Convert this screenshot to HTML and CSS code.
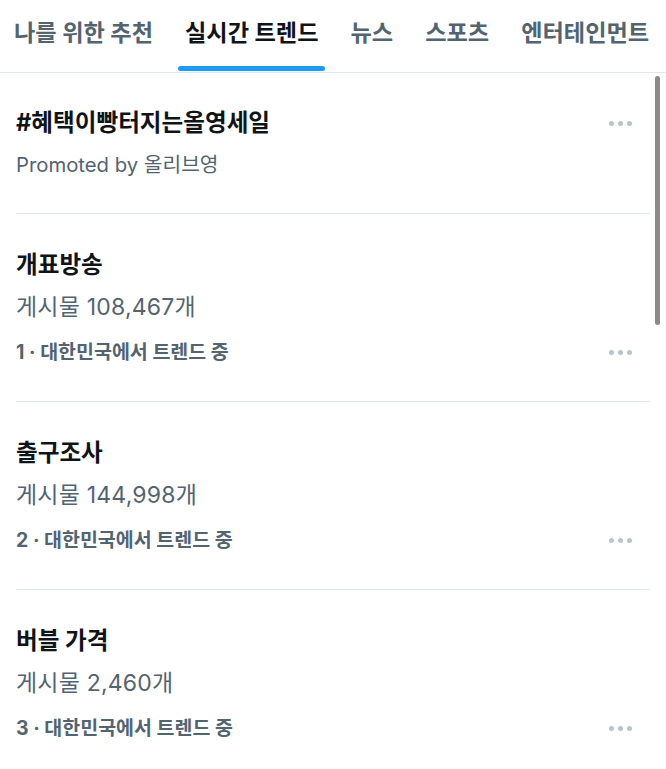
FILE: index.html
```html
<!DOCTYPE html>
<html lang="ko">
<head>
<meta charset="utf-8">
<title>실시간 트렌드</title>
<link rel="stylesheet" href="styles.css">
</head>
<body>
<div class="page">
  <nav class="tabs">
    <a class="tab">나를 위한 추천</a>
    <a class="tab active">실시간 트렌드<span class="bar"></span></a>
    <a class="tab">뉴스</a>
    <a class="tab">스포츠</a>
    <a class="tab">엔터테인먼트</a>
  </nav>

  <ul class="trends">
    <li class="trend promo">
      <div class="row">
        <span class="title">#혜택이빵터지는올영세일</span>
        <span class="more"><i></i><i></i><i></i></span>
      </div>
      <div class="sub">Promoted by 올리브영</div>
    </li>
    <li class="trend">
      <div class="title">개표방송</div>
      <div class="count">게시물 108,467개</div>
      <div class="row rank">
        <span>1 · 대한민국에서 트렌드 중</span>
        <span class="more"><i></i><i></i><i></i></span>
      </div>
    </li>
    <li class="trend">
      <div class="title">출구조사</div>
      <div class="count">게시물 144,998개</div>
      <div class="row rank">
        <span>2 · 대한민국에서 트렌드 중</span>
        <span class="more"><i></i><i></i><i></i></span>
      </div>
    </li>
    <li class="trend">
      <div class="title">버블 가격</div>
      <div class="count">게시물 2,460개</div>
      <div class="row rank">
        <span>3 · 대한민국에서 트렌드 중</span>
        <span class="more"><i></i><i></i><i></i></span>
      </div>
    </li>
  </ul>

  <div class="scrollbar"></div>
</div>
</body>
</html>
```

FILE: styles.css
```css
body {
    margin: 0;
    background: #fff;
    font-family: Inter, "Noto Sans CJK KR", sans-serif;
    color: #0f1419;
}
.page {
    position: relative;
    width: 666px;
    height: 769px;
    overflow: hidden;
}

/* tabs */
.tabs {
    display: flex;
    height: 72px;
    border-bottom: 1px solid #e1e8ec;
    white-space: nowrap;
}
.tab {
    display: flex;
    flex-direction: column;
    align-items: stretch;
    padding: 17px 16px 0;
    font-size: 23.2px;
    line-height: 32px;
    font-weight: 700;
    color: #536471;
}
.tab:first-child {
    margin-left: -2px;
}
.tab.active {
    color: #0f1419;
}
.tab .bar {
    display: block;
    height: 5px;
    margin: 17px -7px 0;
    border-radius: 3px;
    background: #1d9bf0;
}

/* trends list */
.trends {
    list-style: none;
    margin: 0;
    padding: 0;
}
.trend {
    margin: 0 16px;
    padding: 35px 16px 33px 0;
    border-bottom: 1px solid #e1e8ec;
}
.trend.promo {
    padding-top: 34px;
    padding-bottom: 32px;
}
.row {
    display: flex;
    align-items: center;
    justify-content: space-between;
}
.title {
    font-size: 23.6px;
    line-height: 32px;
    font-weight: 700;
}
.sub,
.count {
    margin-top: 10px;
    font-size: 20.3px;
    line-height: 32px;
    color: #536471;
}
.count {
    font-size: 23px;
    letter-spacing: 0.2px;
}
.rank {
    margin-top: 13px;
    font-size: 19.5px;
    line-height: 32px;
    font-weight: 700;
    color: #536471;
}
.more {
    display: flex;
    gap: 4px;
    margin-right: 2px;
}
.more i {
    width: 5px;
    height: 5px;
    border-radius: 50%;
    background: #b9c3cb;
}

.scrollbar {
    position: absolute;
    top: 76px;
    left: 655px;
    width: 5px;
    height: 249px;
    border-radius: 3px;
    background: #8a8a8a;
}
```
